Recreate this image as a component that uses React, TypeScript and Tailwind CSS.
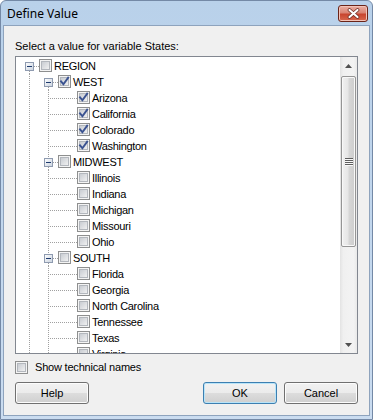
type Row = { label: string; level: 0 | 1 | 2; checked?: boolean; first?: boolean };

const rows: Row[] = [
  { label: "REGION", level: 0 },
  { label: "WEST", level: 1, checked: true, first: true },
  { label: "Arizona", level: 2, checked: true },
  { label: "California", level: 2, checked: true },
  { label: "Colorado", level: 2, checked: true },
  { label: "Washington", level: 2, checked: true },
  { label: "MIDWEST", level: 1 },
  { label: "Illinois", level: 2 },
  { label: "Indiana", level: 2 },
  { label: "Michigan", level: 2 },
  { label: "Missouri", level: 2 },
  { label: "Ohio", level: 2 },
  { label: "SOUTH", level: 1 },
  { label: "Florida", level: 2 },
  { label: "Georgia", level: 2 },
  { label: "North Carolina", level: 2 },
  { label: "Tennessee", level: 2 },
  { label: "Texas", level: 2 },
  { label: "Virginia", level: 2 },
];

const dot = { stroke: "#a0a0a0", strokeDasharray: "1 1", shapeRendering: "crispEdges" as const };

function Expander({ x }: { x: number }) {
  // 9x9 box with a minus sign, x = left pixel
  return (
    <>
      <rect x={x + 0.5} y={4.5} width={8} height={8} fill="url(#expg)" stroke="#8f9bb0" shapeRendering="crispEdges" />
      <line x1={x + 2} x2={x + 7} y1={8.5} y2={8.5} stroke="#1d3a6e" shapeRendering="crispEdges" />
    </>
  );
}

function TreeLines({ level, first }: { level: number; first?: boolean }) {
  const w = 19 * (level + 1);
  return (
    <svg width={w} height={16} className="block shrink-0">
      <defs>
        <linearGradient id="expg" x1="0" y1="0" x2="1" y2="1">
          <stop offset="0" stopColor="#ffffff" />
          <stop offset="1" stopColor="#c9d2de" />
        </linearGradient>
      </defs>
      {level === 0 && (
        <>
          <line x1={14} x2={19} y1={8.5} y2={8.5} {...dot} />
          <line x1={9.5} x2={9.5} y1={13} y2={16} {...dot} />
          <Expander x={5} />
        </>
      )}
      {level === 1 && (
        <>
          <line x1={9.5} x2={9.5} y1={0} y2={16} {...dot} />
          {!first && <line x1={28.5} x2={28.5} y1={0} y2={4} {...dot} />}
          <line x1={28.5} x2={28.5} y1={13} y2={16} {...dot} />
          <line x1={33} x2={38} y1={8.5} y2={8.5} {...dot} />
          <Expander x={24} />
        </>
      )}
      {level === 2 && (
        <>
          <line x1={9.5} x2={9.5} y1={0} y2={16} {...dot} />
          <line x1={28.5} x2={28.5} y1={0} y2={16} {...dot} />
          <line x1={30} x2={57} y1={8.5} y2={8.5} {...dot} />
        </>
      )}
    </svg>
  );
}

function CheckBox({ checked }: { checked?: boolean }) {
  return (
    <svg width={13} height={13} className="block shrink-0">
      <defs>
        <linearGradient id="cbg" x1="0" y1="0" x2="1" y2="1">
          <stop offset="0" stopColor="#c6cad0" />
          <stop offset="1" stopColor="#f3f3f3" />
        </linearGradient>
      </defs>
      <rect x={0.5} y={0.5} width={12} height={12} fill="#f4f4f4" stroke="#8e8f8f" shapeRendering="crispEdges" />
      <rect x={2.5} y={2.5} width={8} height={8} fill="url(#cbg)" stroke="#b3b7bd" shapeRendering="crispEdges" />
      {checked && (
        <path d="M3 6.3 L5.4 9.2 L10.2 2.6" fill="none" stroke="#3b5391" strokeWidth={1.9} strokeLinecap="square" />
      )}
    </svg>
  );
}

function Button({ label, isDefault }: { label: string; isDefault?: boolean }) {
  return (
    <button
      className={
        isDefault
          ? "w-[74px] h-[22px] rounded-[3px] border border-[#3c7fb1] shadow-[inset_0_0_0_1px_#b9e4f8] bg-[linear-gradient(#f2f2f2_0%,#ebebeb_50%,#dddddd_50%,#cfcfcf_100%)] text-[11px] text-black font-['Liberation_Sans',Arial,sans-serif]"
          : "w-[74px] h-[22px] rounded-[3px] border border-[#707070] shadow-[inset_0_0_0_1px_#fcfcfc] bg-[linear-gradient(#f2f2f2_0%,#ebebeb_50%,#dddddd_50%,#cfcfcf_100%)] text-[11px] text-black font-['Liberation_Sans',Arial,sans-serif]"
      }
    >
      {label}
    </button>
  );
}

export default function App() {
  return (
    <div className="w-[373px] h-[420px] flex flex-col rounded-t-[6px] border border-[#7489a6] bg-linear-to-b from-[#b9d1ea] to-[#cadcf0] px-[2px] pb-[3px] font-['Liberation_Sans',Arial,sans-serif]">
      {/* title bar */}
      <div className="h-[24px] flex items-start justify-between">
        <div className="pl-[4px] pt-[5px] text-[12px] leading-[15px] text-black font-['Noto_Sans',sans-serif]">Define Value</div>
        <div className="mt-[4px] mr-[2px] w-[30px] h-[17px] rounded-[3px] border border-[#6b2418] bg-[linear-gradient(#eab0a3_0%,#da8474_45%,#c8452f_55%,#d9694f_100%)] shadow-[inset_0_0_0_1px_#f2c3b8] flex items-center justify-center">
          <svg width={13} height={11} className="block">
            <path d="M2.5 2 L10.5 9 M10.5 2 L2.5 9" stroke="#6a2a20" strokeWidth={3.6} strokeLinecap="round" />
            <path d="M2.5 2 L10.5 9 M10.5 2 L2.5 9" stroke="#ffffff" strokeWidth={2.2} strokeLinecap="round" />
          </svg>
        </div>
      </div>

      {/* client area */}
      <div className="flex-1 flex flex-col border border-[#8ea3bd] bg-[#f0f0f0] px-[11px] pt-[13px] pb-[10px] text-[11px] text-black">
        <div className="h-[14px] leading-[14px]">Select a value for variable States:</div>

        <div className="mt-[3px] h-[298px] flex border border-[#828790] bg-white">
          <div className="flex-1 overflow-hidden pl-[4px] pt-[1px]">
            {rows.map((r) => (
              <div key={r.label} className="flex h-4 items-start">
                <TreeLines level={r.level} first={r.first} />
                <div className="mt-[1px]">
                  <CheckBox checked={r.checked} />
                </div>
                <span className="ml-[2px] leading-[16px] whitespace-nowrap tracking-[-0.3px]">{r.label}</span>
              </div>
            ))}
          </div>

          {/* scrollbar */}
          <div className="w-[17px] flex flex-col bg-[linear-gradient(90deg,#e3e3e3,#f0f0f0_20%,#f3f3f3_80%,#e9e9e9)]">
            <div className="h-[17px] flex items-center justify-center">
              <svg width={7} height={4} className="block">
                <path d="M0 4 L3.5 0 L7 4 Z" fill="#505050" />
              </svg>
            </div>
            <div className="flex-1 pt-[2px]">
              <div className="mx-[1px] h-[171px] rounded-[2px] border border-[#959595] shadow-[inset_0_0_0_1px_#f8f8f8] bg-[linear-gradient(90deg,#f1f1f1,#e6e6e6_45%,#d6d6d6_55%,#cdcdcd)] flex items-center justify-center">
                <svg width={8} height={8} className="block">
                  {[0, 2, 4, 6].map((y) => (
                    <g key={y}>
                      <line x1={0} x2={8} y1={y + 0.5} y2={y + 0.5} stroke="#5e5e5e" />
                      <line x1={0} x2={8} y1={y + 1.5} y2={y + 1.5} stroke="#f8f8f8" />
                    </g>
                  ))}
                </svg>
              </div>
            </div>
            <div className="h-[17px] flex items-center justify-center">
              <svg width={7} height={4} className="block">
                <path d="M0 0 L7 0 L3.5 4 Z" fill="#505050" />
              </svg>
            </div>
          </div>
        </div>

        <div className="mt-[6px] h-[14px] flex items-center">
          <CheckBox />
          <span className="ml-[7px] leading-[14px] tracking-[-0.2px]">Show technical names</span>
        </div>

        <div className="mt-[8px] flex items-center">
          <Button label="Help" />
          <div className="flex-1" />
          <Button label="OK" isDefault />
          <div className="w-[7px]" />
          <Button label="Cancel" />
        </div>
      </div>
    </div>
  );
}
